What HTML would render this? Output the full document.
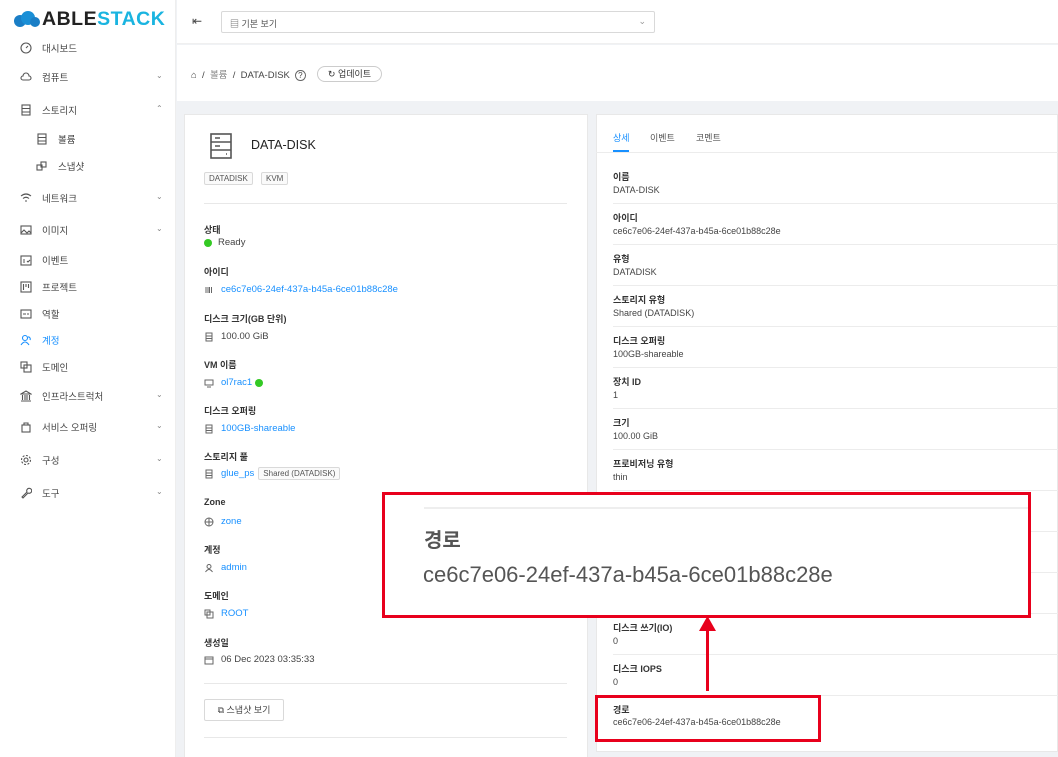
<!DOCTYPE html>
<html style="overflow:hidden;height:757px"><head><meta charset="utf-8"><style>
*{box-sizing:border-box;margin:0;padding:0}
body{width:1058px;height:757px;overflow:hidden;font-family:"Liberation Sans","Noto Sans CJK KR",sans-serif;background:#f0f2f5;position:relative;color:#333;font-size:9.5px}
.abs{position:absolute}
#side{left:0;top:0;width:176px;height:757px;background:#fff;border-right:1px solid #eee}
.logo{left:12px;top:8px;font-weight:bold;font-size:19.5px;letter-spacing:.5px}
.nav{left:20px;font-size:9.5px;color:#444;display:flex;align-items:center}
.nav svg{width:12px;height:12px;margin-right:10px;stroke:#555;fill:none;stroke-width:1.1}
.chev{left:156px;font-size:8px;color:#888}
#head{left:177px;top:0;width:881px;height:44px;background:#fff;border-bottom:1px solid #f0f0f0}
#crumb{left:177px;top:45px;width:881px;height:56px;background:#fff}
.card{background:#fff;border:1px solid #e8e8e8}
.lbl{font-size:9px;color:#333;font-weight:bold;left:204px}
.val{left:204px;font-size:9.5px;color:#444;display:flex;align-items:center}
.val svg{width:10px;height:10px;margin-right:7px;stroke:#666;fill:none;stroke-width:1}
.lnk{color:#1890ff}
.tag{border:1px solid #d9d9d9;border-radius:2px;background:#fafafa;font-size:8px;padding:1px 4px;color:#555}
.rl{left:613px;font-size:9px;color:#333;font-weight:bold}
.rv{left:613px;font-size:9px;color:#444}
.rd{left:613px;width:445px;height:1px;background:#ececec}
</style></head><body>
<div id="side" class="abs">
<div class="abs logo"><svg width="30" height="16" viewBox="0 0 30 16" style="vertical-align:-2px"><circle cx="8" cy="10" r="6" fill="#1a7ec6"/><circle cx="16" cy="7" r="7" fill="#1a8fd6"/><circle cx="23" cy="11" r="5" fill="#1a7ec6"/></svg><span style="color:#222">ABLE</span><span style="color:#1ab4e0">STACK</span></div>
</div>
<div class="abs nav" style="top:41px"><svg viewBox="0 0 12 12"><circle cx="6" cy="6" r="5"/><path d="M6 6l2-2"/></svg>대시보드</div>
<div class="abs nav" style="top:70px"><svg viewBox="0 0 12 12"><path d="M3 9h6a2 2 0 0 0 0-4 3 3 0 0 0-6 0 2 2 0 0 0 0 4z"/></svg>컴퓨트</div><div class="abs chev" style="top:71px">⌄</div>
<div class="abs nav" style="top:103px"><svg viewBox="0 0 12 12"><rect x="2" y="1" width="8" height="10"/><path d="M2 4.5h8M2 8h8"/></svg>스토리지</div><div class="abs chev" style="top:104px">⌃</div>
<div class="abs nav" style="top:132px;left:36px"><svg viewBox="0 0 12 12"><rect x="2" y="1" width="8" height="10"/><path d="M2 4.5h8M2 8h8"/></svg>볼륨</div>
<div class="abs nav" style="top:159px;left:36px"><svg viewBox="0 0 12 12"><rect x="1" y="5" width="5" height="5"/><rect x="5" y="2" width="5" height="5"/></svg>스냅샷</div>
<div class="abs nav" style="top:191px"><svg viewBox="0 0 12 12"><path d="M1 4q5-4 10 0M3 6.5q3-2.5 6 0M5 9h2"/></svg>네트워크</div><div class="abs chev" style="top:192px">⌄</div>
<div class="abs nav" style="top:223px"><svg viewBox="0 0 12 12"><rect x="1" y="2" width="10" height="8"/><path d="M1 9l3-3 3 3 2-2 2 2"/></svg>이미지</div><div class="abs chev" style="top:224px">⌄</div>
<div class="abs nav" style="top:253px"><svg viewBox="0 0 12 12"><rect x="1" y="2" width="10" height="9"/><path d="M3 6h2M3 8h2M7 7l1 1 2-2"/></svg>이벤트</div>
<div class="abs nav" style="top:280px"><svg viewBox="0 0 12 12"><rect x="1" y="1" width="10" height="10"/><path d="M3.5 3v6M6 3v3M8.5 3v4"/></svg>프로젝트</div>
<div class="abs nav" style="top:307px"><svg viewBox="0 0 12 12"><rect x="1" y="2" width="10" height="8"/><path d="M3 6h3M7 6h2"/></svg>역할</div>
<div class="abs nav" style="top:333px;color:#1890ff"><svg viewBox="0 0 12 12" style="stroke:#1890ff"><circle cx="5" cy="4" r="2.5"/><path d="M1 11q4-6 8 0M8 3a2 2 0 0 1 2 3"/></svg>계정</div>
<div class="abs nav" style="top:360px"><svg viewBox="0 0 12 12"><rect x="1" y="1" width="6" height="6"/><rect x="4" y="4" width="7" height="7"/></svg>도메인</div>
<div class="abs nav" style="top:389px"><svg viewBox="0 0 12 12"><path d="M1 4l5-3 5 3zM2.5 5v5M5 5v5M7 5v5M9.5 5v5M1 11h10"/></svg>인프라스트럭처</div><div class="abs chev" style="top:390px">⌄</div>
<div class="abs nav" style="top:420px"><svg viewBox="0 0 12 12"><rect x="2" y="4" width="8" height="7"/><path d="M4 4V2h4v2"/></svg>서비스 오퍼링</div><div class="abs chev" style="top:421px">⌄</div>
<div class="abs nav" style="top:453px"><svg viewBox="0 0 12 12"><circle cx="6" cy="6" r="2"/><circle cx="6" cy="6" r="4.5" stroke-dasharray="2 1.5"/></svg>구성</div><div class="abs chev" style="top:454px">⌄</div>
<div class="abs nav" style="top:486px"><svg viewBox="0 0 12 12"><path d="M2 10l5-5a2.5 2.5 0 1 1 1 1l-5 5z"/></svg>도구</div><div class="abs chev" style="top:487px">⌄</div>

<div id="head" class="abs">
<div class="abs" style="left:15px;top:14px;font-size:12px;color:#444">⇤</div>
<div class="abs" style="left:44px;top:11px;width:434px;height:22px;border:1px solid #d9d9d9;border-radius:2px;font-size:9px;color:#555;padding:5px 8px">▤ 기본 보기<span style="position:absolute;right:8px;top:4px;color:#999">⌄</span></div>
</div>
<div id="crumb" class="abs">
<div class="abs" style="left:14px;top:22px;font-size:9.5px;color:#444">⌂ &nbsp;/ &nbsp;<span style="color:#888">볼륨</span> &nbsp;/ &nbsp;DATA-DISK &nbsp;<span style="font-size:8px;border:1px solid #666;border-radius:50%;padding:0 2px">?</span></div>
<div class="abs" style="left:140px;top:21px;width:65px;height:16px;border:1px solid #ccc;border-radius:9px;font-size:9px;text-align:center;line-height:14px;color:#333">↻ 업데이트</div>
</div>

<div class="abs card" style="left:184px;top:114px;width:404px;height:643px;border-bottom:none"></div>
<svg class="abs" style="left:210px;top:133px" width="22" height="26" viewBox="0 0 22 26" fill="none" stroke="#555" stroke-width="1.6"><rect x="1" y="1" width="20" height="24"/><path d="M1 9h20M1 17h20M5 5h5M5 13h5M16 21h1"/></svg>
<div class="abs" style="left:251px;top:138px;font-size:12.5px;color:#222">DATA-DISK</div>
<div class="abs tag" style="left:204px;top:172px">DATADISK</div>
<div class="abs tag" style="left:261px;top:172px">KVM</div>
<div class="abs" style="left:204px;top:203px;width:363px;height:1px;background:#e8e8e8"></div>
<div class="abs lbl" style="top:223px">상태</div><div class="abs val" style="top:237px"><span style="width:8px;height:8px;border-radius:50%;background:#34c924;margin-right:6px"></span>Ready</div>
<div class="abs lbl" style="top:265px">아이디</div><div class="abs val lnk" style="top:284px"><svg viewBox="0 0 10 10"><path d="M2 2v6M4 2v6M5.5 2v6M7.5 2v6"/></svg>ce6c7e06-24ef-437a-b45a-6ce01b88c28e</div>
<div class="abs lbl" style="top:312px">디스크 크기(GB 단위)</div><div class="abs val" style="top:331px"><svg viewBox="0 0 10 10"><rect x="2" y="1" width="6" height="8"/><path d="M2 4h6M2 6.5h6"/></svg>100.00 GiB</div>
<div class="abs lbl" style="top:358px">VM 이름</div><div class="abs val lnk" style="top:377px"><svg viewBox="0 0 10 10"><rect x="1" y="2" width="8" height="5"/><path d="M3 9h4"/></svg>ol7rac1 <span style="width:8px;height:8px;border-radius:50%;background:#34c924;margin-left:3px"></span></div>
<div class="abs lbl" style="top:404px">디스크 오퍼링</div><div class="abs val lnk" style="top:423px"><svg viewBox="0 0 10 10"><rect x="2" y="1" width="6" height="8"/><path d="M2 4h6M2 6.5h6"/></svg>100GB-shareable</div>
<div class="abs lbl" style="top:450px">스토리지 풀</div><div class="abs val lnk" style="top:467px"><svg viewBox="0 0 10 10"><rect x="2" y="1" width="6" height="8"/><path d="M2 4h6M2 6.5h6"/></svg>glue_ps<span class="tag" style="margin-left:4px">Shared (DATADISK)</span></div>
<div class="abs lbl" style="top:497px">Zone</div><div class="abs val lnk" style="top:516px"><svg viewBox="0 0 10 10"><circle cx="5" cy="5" r="4"/><path d="M1 5h8M5 1v8"/></svg>zone</div>
<div class="abs lbl" style="top:543px">계정</div><div class="abs val lnk" style="top:562px"><svg viewBox="0 0 10 10"><circle cx="5" cy="3.5" r="2"/><path d="M1.5 9q3.5-5 7 0"/></svg>admin</div>
<div class="abs lbl" style="top:589px">도메인</div><div class="abs val lnk" style="top:608px"><svg viewBox="0 0 10 10"><rect x="1" y="1" width="5" height="5"/><rect x="3" y="3" width="6" height="6"/></svg>ROOT</div>
<div class="abs lbl" style="top:636px">생성일</div><div class="abs val" style="top:654px"><svg viewBox="0 0 10 10"><rect x="1" y="2" width="8" height="7"/><path d="M1 4h8"/></svg>06 Dec 2023 03:35:33</div>
<div class="abs" style="left:204px;top:683px;width:363px;height:1px;background:#e8e8e8"></div>
<div class="abs" style="left:204px;top:699px;width:80px;height:22px;border:1px solid #d9d9d9;border-radius:2px;font-size:9px;color:#444;text-align:center;line-height:20px">⧉ 스냅샷 보기</div>
<div class="abs" style="left:204px;top:737px;width:363px;height:1px;background:#e8e8e8"></div>

<div class="abs card" style="left:596px;top:114px;width:462px;height:638px"></div>
<div class="abs" style="left:613px;top:131px;font-size:9px;color:#1890ff">상세</div>
<div class="abs" style="left:613px;top:150px;width:16px;height:2px;background:#1890ff"></div>
<div class="abs" style="left:650px;top:131px;font-size:9px;color:#555">이벤트</div>
<div class="abs" style="left:696px;top:131px;font-size:9px;color:#555">코멘트</div>
<div class="abs" style="left:596px;top:152px;width:462px;height:1px;background:#ececec"></div>

<div class="abs rl" style="top:170px">이름</div><div class="abs rv" style="top:185px">DATA-DISK</div><div class="abs rd" style="top:203px"></div>
<div class="abs rl" style="top:211px">아이디</div><div class="abs rv" style="top:226px">ce6c7e06-24ef-437a-b45a-6ce01b88c28e</div><div class="abs rd" style="top:244px"></div>
<div class="abs rl" style="top:252px">유형</div><div class="abs rv" style="top:267px">DATADISK</div><div class="abs rd" style="top:285px"></div>
<div class="abs rl" style="top:293px">스토리지 유형</div><div class="abs rv" style="top:308px">Shared (DATADISK)</div><div class="abs rd" style="top:326px"></div>
<div class="abs rl" style="top:334px">디스크 오퍼링</div><div class="abs rv" style="top:349px">100GB-shareable</div><div class="abs rd" style="top:367px"></div>
<div class="abs rl" style="top:375px">장치 ID</div><div class="abs rv" style="top:390px">1</div><div class="abs rd" style="top:408px"></div>
<div class="abs rl" style="top:416px">크기</div><div class="abs rv" style="top:431px">100.00 GiB</div><div class="abs rd" style="top:449px"></div>
<div class="abs rl" style="top:457px">프로비저닝 유형</div><div class="abs rv" style="top:472px">thin</div><div class="abs rd" style="top:490px"></div>
<div class="abs rd" style="top:531px"></div><div class="abs rd" style="top:572px"></div><div class="abs rd" style="top:613px"></div>
<div class="abs rl" style="top:621px">디스크 쓰기(IO)</div><div class="abs rv" style="top:636px">0</div><div class="abs rd" style="top:654px"></div>
<div class="abs rl" style="top:662px">디스크 IOPS</div><div class="abs rv" style="top:677px">0</div><div class="abs rd" style="top:695px"></div>
<div class="abs rl" style="top:703px">경로</div><div class="abs rv" style="top:717px">ce6c7e06-24ef-437a-b45a-6ce01b88c28e</div>

<div class="abs" style="left:595px;top:695px;width:226px;height:47px;border:3px solid #e8001c"></div>
<div class="abs" style="left:706px;top:628px;width:3px;height:63px;background:#e8001c"></div>
<svg class="abs" style="left:699px;top:616px" width="17" height="15"><path d="M8.5 0L17 15H0z" fill="#e8001c"/></svg>
<div class="abs" style="left:382px;top:492px;width:649px;height:126px;border:3px solid #e8001c;background:#fff"></div>
<div class="abs" style="left:424px;top:507px;width:604px;height:2px;background:#eee"></div>
<div class="abs" style="left:424px;top:524px;font-size:20px;font-weight:bold;color:#555">경로</div>
<div class="abs" style="left:423px;top:562px;font-size:22px;color:#555">ce6c7e06-24ef-437a-b45a-6ce01b88c28e</div>
</body></html>
